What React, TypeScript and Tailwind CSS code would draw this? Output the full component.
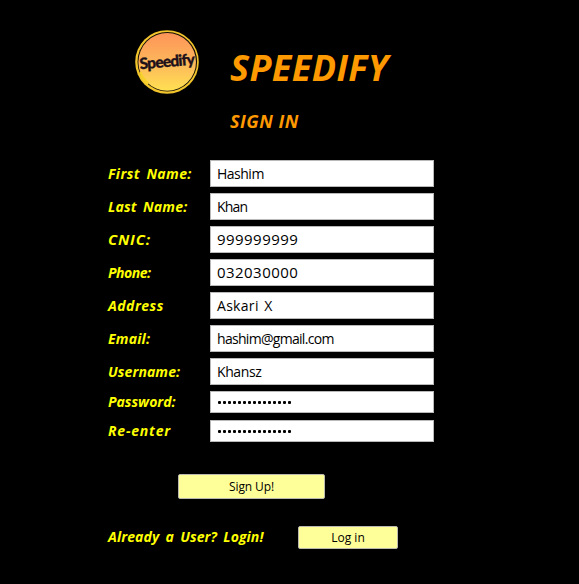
type Field = {
  label: string;
  value: string;
  labelClass: string;
  valueClass: string;
};

const fields: Field[] = [
  { label: 'First Name:', value: 'Hashim', labelClass: 'text-[14px] tracking-[0.4px]', valueClass: 'text-[14px] tracking-[-0.5px]' },
  { label: 'Last Name:', value: 'Khan', labelClass: 'text-[14px] tracking-[0.2px]', valueClass: 'text-[14px] tracking-[-0.8px]' },
  { label: 'CNIC:', value: '999999999', labelClass: 'pb-[2px] text-[15px] tracking-[0.8px]', valueClass: 'pb-[2px] text-[15px] tracking-[0.45px]' },
  { label: 'Phone:', value: '032030000', labelClass: 'text-[14px] tracking-[-0.5px]', valueClass: 'pb-[2px] text-[15px] tracking-[0.45px]' },
  { label: 'Address', value: 'Askari X', labelClass: 'text-[14px] tracking-[0.5px]', valueClass: 'text-[14px] tracking-[0.3px]' },
  { label: 'Email:', value: 'hashim@gmail.com', labelClass: 'text-[14px] tracking-[0.2px]', valueClass: 'text-[14px] tracking-[-0.7px]' },
  { label: 'Username:', value: 'Khansz', labelClass: 'text-[14px] tracking-[0.1px]', valueClass: 'text-[14px] tracking-[-0.4px]' },
];

const labelBase =
  "whitespace-pre leading-[20px] font-bold italic text-[#ffff00] [word-spacing:2.5px] font-['Comic_Sans_MS','Open_Sans',sans-serif]";
const segoe = "font-['Open_Sans',sans-serif]";

function Logo() {
  return (
    <svg className="mt-[29px] ml-[134px] h-[66px] w-[66px] shrink-0 overflow-visible" viewBox="0 0 66 66">
      <defs>
        <linearGradient id="sun" x1="0" y1="0" x2="0" y2="1">
          <stop offset="0" stopColor="#fd9458" />
          <stop offset="0.5" stopColor="#fdb65b" />
          <stop offset="1" stopColor="#ffe052" />
        </linearGradient>
      </defs>
      <circle cx="33" cy="33" r="31.8" fill="#f3c52c" />
      <circle cx="33.3" cy="32.7" r="29.8" fill="#171006" />
      <circle cx="33.2" cy="32.9" r="28.8" fill="url(#sun)" />
      <path d="M5.5 43 Q7 51 13.5 56 L15 53.5 Q9 48 7.5 43Z" fill="#f8d22c" />
      <text
        x="33"
        y="38"
        textAnchor="middle"
        transform="rotate(-5 33 36)"
        fill="#20101a"
        stroke="#20101a"
        strokeWidth="0.3"
        fontFamily="Lato, sans-serif"
        fontWeight="900"
        fontSize="15.6"
        letterSpacing="-0.8"
      >
        Speedify
      </text>
    </svg>
  );
}

function PasswordRow({ label, labelClass }: { label: string; labelClass: string }) {
  return (
    <div className="flex h-[22px] items-center">
      <span className={`w-[102px] text-[14px] ${labelBase} ${labelClass}`}>{label}</span>
      <div className="flex h-[22px] w-[224px] items-center gap-[2px] border border-[#b9b9b9] bg-white pl-[7px] pt-px">
        {Array.from({ length: 15 }, (_, i) => (
          <span key={i} className="h-[3px] w-[3px] rounded-[1px] bg-black" />
        ))}
      </div>
    </div>
  );
}

export default function App() {
  return (
    <main className="flex h-[584px] w-[579px] flex-col overflow-hidden bg-black">
      <header className="flex h-[160px] items-start">
        <Logo />
        <div className={`ml-[30px] flex flex-col font-bold italic text-[#ff9900] ${segoe}`}>
          <h1 className="mt-[43px] whitespace-pre text-[36px] leading-[50px] tracking-[0.4px]">SPEEDIFY</h1>
          <h2 className="mt-[15px] whitespace-pre text-[18px] leading-[26px] tracking-[0.5px]">SIGN IN</h2>
        </div>
      </header>

      <section className="ml-[108px] flex flex-col">
        <div className="flex flex-col gap-[6px]">
          {fields.map((f) => (
            <div key={f.label} className="flex h-[27px] items-center">
              <span className={`w-[102px] ${labelBase} ${f.labelClass}`}>{f.label}</span>
              <div className="flex h-[27px] w-[224px] items-center border border-[#b9b9b9] bg-white pl-[6px]">
                <span
                  className={`whitespace-pre leading-[20px] text-black [word-spacing:1.5px] font-['Comic_Sans_MS','Open_Sans',sans-serif] ${f.valueClass}`}
                >
                  {f.value}
                </span>
              </div>
            </div>
          ))}
        </div>
        <div className="mt-[6px] flex flex-col gap-[7px]">
          <PasswordRow label="Password:" labelClass="tracking-[0px]" />
          <PasswordRow label="Re-enter" labelClass="tracking-[0.8px]" />
        </div>
      </section>

      <button
        className={`mt-[32px] ml-[178px] flex h-[25px] w-[147px] items-center justify-center rounded-[2px] border border-[#b9b9b0] bg-[#ffff99] text-[12px] tracking-[-0.1px] text-black ${segoe}`}
      >
        Sign Up!
      </button>
      <div className="mt-[27px] ml-[108px] flex h-[23px] items-center">
        <span className={`mb-[2px] w-[190px] text-[14px] tracking-[0.1px] ${labelBase}`}>Already a User? Login!</span>
        <button
          className={`flex h-[23px] w-[100px] items-center justify-center rounded-[2px] border border-[#b9b9b0] bg-[#ffff99] text-[12px] text-black ${segoe}`}
        >
          Log in
        </button>
      </div>
    </main>
  );
}
